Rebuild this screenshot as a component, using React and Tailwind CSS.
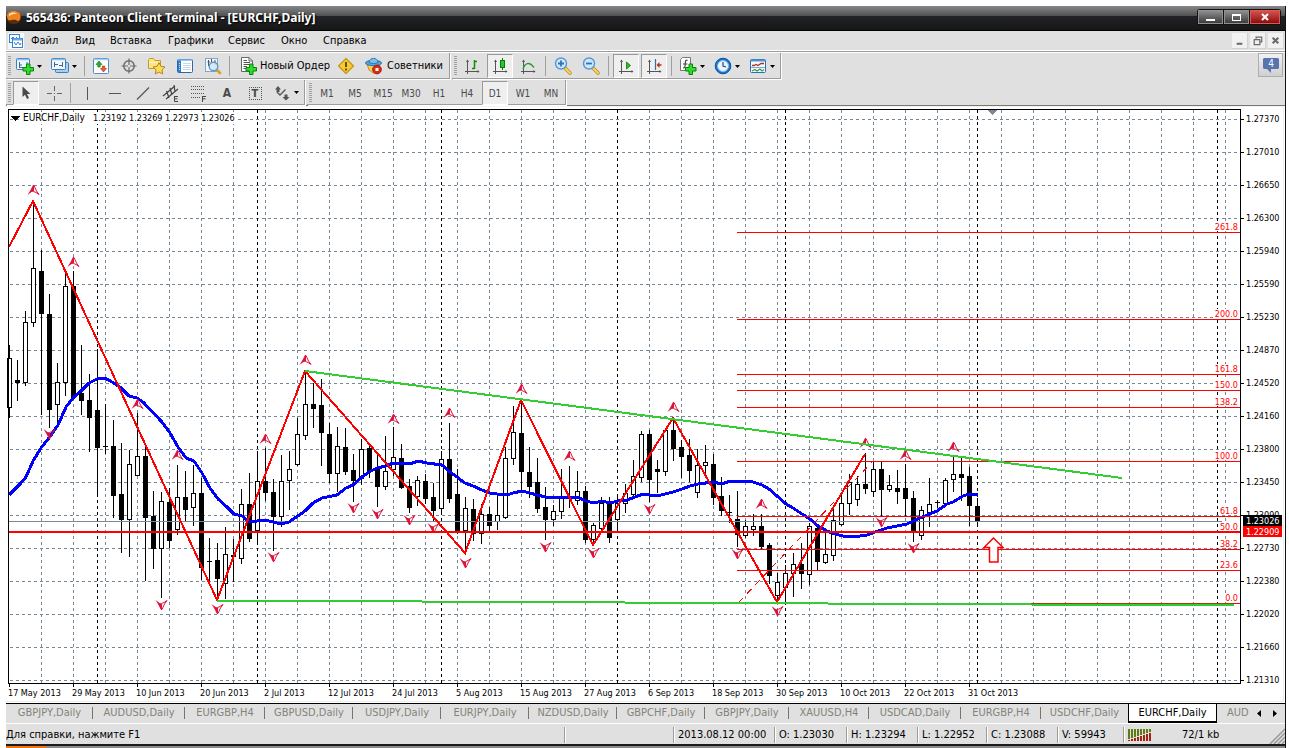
import React, { useState } from 'react';

// One row per bar: [high, body top, body bottom, low, rising]
const CANDLES = [
  [345, 358, 407, 417, 1], [360, 380, 382, 400, 0], [311, 322, 382, 385, 1], [201, 268, 322, 326, 1],
  [250, 271, 313, 414, 0], [294, 314, 409, 427, 0], [363, 382, 404, 425, 1], [272, 286, 382, 395, 1],
  [271, 286, 397, 398, 0], [345, 393, 400, 414, 0], [374, 400, 417, 451, 0], [349, 410, 447, 495, 0],
  [404, 446, 446, 453, 0], [420, 446, 495, 517, 0], [443, 494, 519, 552, 0], [450, 464, 519, 556, 1],
  [413, 456, 475, 475, 1], [447, 456, 517, 580, 0], [491, 516, 548, 568, 0], [492, 501, 548, 597, 1],
  [488, 502, 540, 547, 0], [465, 497, 529, 534, 1], [471, 497, 509, 521, 0], [465, 493, 507, 525, 1],
  [478, 493, 567, 579, 0], [538, 561, 561, 580, 0], [543, 560, 578, 599, 0], [527, 554, 583, 598, 1],
  [539, 555, 556, 581, 0], [489, 504, 558, 563, 1], [473, 504, 538, 541, 0], [451, 481, 530, 543, 1],
  [448, 481, 492, 500, 0], [479, 492, 516, 550, 0], [455, 481, 516, 526, 1], [451, 469, 480, 509, 1],
  [418, 434, 464, 465, 1], [371, 404, 435, 439, 1], [383, 404, 408, 427, 0], [379, 405, 432, 465, 0],
  [423, 434, 473, 482, 0], [427, 446, 473, 491, 1], [428, 447, 471, 474, 0], [454, 470, 480, 501, 0],
  [439, 449, 478, 484, 1], [445, 448, 470, 477, 0], [455, 467, 486, 506, 0], [436, 471, 486, 489, 1],
  [427, 457, 469, 475, 1], [444, 458, 487, 488, 0], [479, 486, 507, 512, 0], [476, 480, 496, 505, 1],
  [474, 481, 498, 503, 0], [483, 497, 510, 521, 0], [451, 459, 508, 514, 1], [423, 459, 498, 502, 0],
  [469, 494, 532, 533, 0], [497, 508, 530, 552, 1], [499, 509, 533, 540, 0], [504, 514, 533, 543, 1],
  [507, 514, 525, 530, 0], [496, 515, 521, 529, 1], [447, 458, 517, 518, 1], [406, 432, 458, 464, 1],
  [400, 433, 471, 492, 0], [447, 472, 486, 497, 0], [458, 482, 508, 512, 0], [487, 507, 519, 539, 0],
  [505, 511, 519, 525, 1], [469, 496, 511, 518, 1], [466, 497, 497, 507, 0], [471, 491, 500, 504, 1],
  [486, 491, 539, 542, 0], [523, 525, 539, 544, 1], [497, 503, 528, 529, 1], [497, 504, 537, 542, 0],
  [495, 503, 519, 530, 1], [484, 493, 503, 512, 1], [460, 476, 494, 495, 1], [431, 434, 477, 481, 1],
  [430, 434, 479, 501, 0], [460, 469, 471, 492, 0], [430, 430, 471, 475, 1], [418, 430, 448, 460, 0],
  [440, 447, 456, 477, 0], [439, 455, 470, 481, 0], [449, 465, 492, 497, 1], [445, 462, 465, 476, 1],
  [454, 464, 497, 504, 0], [477, 496, 510, 515, 0], [495, 512, 512, 522, 0], [491, 519, 534, 546, 0],
  [520, 526, 535, 537, 1], [514, 526, 529, 535, 1], [514, 526, 546, 548, 0], [543, 545, 575, 583, 0],
  [573, 582, 595, 601, 1], [565, 573, 587, 602, 1], [553, 564, 573, 596, 1], [543, 564, 573, 588, 0],
  [523, 526, 574, 584, 1], [527, 528, 561, 569, 0], [533, 554, 562, 563, 1], [506, 520, 555, 560, 1],
  [495, 503, 524, 525, 1], [474, 482, 503, 514, 1], [476, 484, 499, 505, 1], [453, 484, 488, 493, 0],
  [461, 469, 491, 496, 1], [461, 469, 489, 515, 0], [475, 485, 489, 491, 1], [470, 488, 491, 503, 0],
  [464, 488, 498, 515, 0], [491, 498, 532, 541, 0], [506, 510, 535, 539, 1], [478, 504, 512, 526, 1],
  [500, 502, 502, 507, 0], [478, 480, 503, 503, 1], [457, 474, 479, 491, 1], [457, 474, 477, 500, 0],
  [467, 476, 505, 525, 0], [498, 506, 521, 523, 0],
];

const AVERAGE =
  '9,495 20,484 26,477 33,461 41,448 49,438 58,425 66,407 74,397 82,390 89,383 97,379 105,378 112,382 120,387 129,396 137,398 143,402 162,422 170,433 178,447 186,458 194,461 202,473 210,488 218,499 227,507 234,514 242,516 250,522 257,521 265,520 273,522 281,524 289,522 305,511 313,503 322,498 337,495 346,488 353,485 362,477 369,472 377,468 386,466 393,463 410,464 418,461 427,463 442,465 450,472 457,477 465,483 473,486 482,490 490,493 497,494 507,495 513,493 522,491 530,493 537,495 546,497 562,497 570,498 577,497 586,501 594,503 602,501 610,503 618,501 627,500 635,497 643,494 657,496 673,492 682,489 690,486 698,484 713,482 722,484 730,481 753,482 762,485 769,489 777,496 786,504 793,508 802,514 810,519 818,526 827,531 835,534 843,536 860,536 867,535 875,532 887,528 907,524 920,518 937,511 947,504 953,502 963,496 969,494 978,494';

const ZIGZAG = '9,247 33,201 217,600 305,371 465,553 521,400 593,545 673,418 777,602 865,454';

const UP_FRACTALS = [
  [33, 190], [73, 262], [137, 404], [177, 455], [265, 439], [305, 360], [393, 419], [449, 413],
  [521, 389], [569, 456], [673, 407], [761, 504], [865, 443], [905, 455], [953, 447],
];
const DOWN_FRACTALS = [
  [49, 434], [161, 605], [217, 609], [273, 557], [353, 508], [377, 514], [409, 520], [433, 528],
  [465, 563], [545, 547], [593, 553], [649, 509], [737, 554], [777, 611], [881, 522], [913, 548],
];

const FIB = [
  ['261.8', 232], ['200.0', 319], ['161.8', 374], ['150.0', 390], ['138.2', 407], ['100.0', 461],
  ['61.8', 516], ['50.0', 532], ['38.2', 549], ['23.6', 570], ['0.0', 603],
];

const PRICES = [
  '1.27370', '1.27010', '1.26650', '1.26300', '1.25940', '1.25590', '1.25230', '1.24870', '1.24520',
  '1.24160', '1.23800', '1.23450', '1.23090', '1.22730', '1.22380', '1.22020', '1.21660', '1.21310',
];

const DATES = [
  '17 May 2013', '29 May 2013', '10 Jun 2013', '20 Jun 2013', '2 Jul 2013', '12 Jul 2013',
  '24 Jul 2013', '5 Aug 2013', '15 Aug 2013', '27 Aug 2013', '6 Sep 2013', '18 Sep 2013',
  '30 Sep 2013', '10 Oct 2013', '22 Oct 2013', '31 Oct 2013',
];

const MONTH_LINES = [97, 257, 441, 617, 785, 977, 1217];

const TABS = [
  ['GBPJPY,Daily', 'w-[87px]'], ['AUDUSD,Daily', 'w-[92px]'], ['EURGBP,H4', 'w-[80px]'],
  ['GBPUSD,Daily', 'w-[88px]'], ['USDJPY,Daily', 'w-[88px]'], ['EURJPY,Daily', 'w-[88px]'],
  ['NZDUSD,Daily', 'w-[88px]'], ['GBPCHF,Daily', 'w-[88px]'], ['GBPJPY,Daily', 'w-[84px]'],
  ['XAUUSD,H4', 'w-[80px]'], ['USDCAD,Daily', 'w-[92px]'], ['EURGBP,H4', 'w-[80px]'],
  ['USDCHF,Daily', 'w-[87px]'], ['EURCHF,Daily', 'w-[89px]'],
];

// Arrowhead with a solid left wing and an outlined right one
const Fractal = ({ x, y, down }) => (
  <g transform={`translate(${x} ${y}) scale(1 ${down ? -1 : 1})`} shapeRendering="auto">
    <path d="M-0.500 -5H0.500V1.500L-2 2L-6 5L-3 0Z" fill="#dc143c" />
    <path d="M0.500 -4.500L3 1L5.500 4.500L2.500 2.500L0 1.500" fill="none" stroke="#dc143c" />
  </g>
);

const PriceChart = () => (
  <svg
    viewBox="6 107 1279 596"
    className="block w-full h-auto bg-white font-['DejaVu_Sans_Condensed','DejaVu_Sans',sans-serif]"
    shapeRendering="crispEdges"
    fontSize="9"
    role="img"
    aria-label="EURCHF,Daily"
  >
    {/* grid */}
    <g stroke="#778899" strokeDasharray="3 3">
      {PRICES.map((p, i) => (
        <line key={p} x1="10" x2="1240" y1={119.5 + i * 33} y2={119.5 + i * 33} />
      ))}
      {Array.from({ length: 38 }, (_, i) => (
        <line key={i} x1={41.5 + i * 32} x2={41.5 + i * 32} y1="110" y2="683" />
      ))}
    </g>
    <g stroke="#000" strokeDasharray="3 3">
      {MONTH_LINES.map((x) => (
        <line key={x} x1={x + 0.5} x2={x + 0.5} y1="110" y2="683" />
      ))}
    </g>

    <rect x="22" y="112" width="213" height="12" fill="#fff" />
    <path d="M11 116H20L15.500 121Z" fill="#000" />
    <text x="23" y="121" fontSize="10">EURCHF,Daily</text>
    <text x="93" y="121">1.23192 1.23269 1.22973 1.23026</text>
    <path d="M988 110H997L992.500 115Z" fill="#778899" />

    {/* candles */}
    {CANDLES.map(([high, top, bottom, low, rising], i) => {
      const x = 9 + i * 8;
      return (
        <g key={x}>
          <rect x={x} y={high} width="1" height={low - high + 1} fill="#000" />
          <rect x={x - 2} y={top} width="5" height={bottom - top + 1} fill="#000" />
          {rising ? <rect x={x - 1} y={top + 1} width="3" height={bottom - top - 1} fill="#fff" /> : null}
        </g>
      );
    })}

    <line x1="9" x2="1222" y1="521.5" y2="521.5" stroke="#778899" />
    <polyline points={AVERAGE} fill="none" stroke="#00f" strokeWidth="3" strokeLinejoin="round" />

    {UP_FRACTALS.map(([x, y]) => (
      <Fractal key={x} x={x + 0.5} y={y} />
    ))}
    {DOWN_FRACTALS.map(([x, y]) => (
      <Fractal key={x} x={x + 0.5} y={y} down />
    ))}

    <polyline points={ZIGZAG} fill="none" stroke="#f00" strokeWidth="2" />
    <line x1="739" y1="602" x2="873" y2="461" stroke="#f00" strokeDasharray="6 6" />

    {/* retracement levels */}
    <g fill="#f00" textAnchor="end">
      {FIB.map(([label, y]) => (
        <g key={label}>
          <rect x="737" y={y} width="503" height="1" />
          <rect x={1239 - label.length * 5} y={y - 10} width={label.length * 5} height="9" fill="#fff" />
          <text x="1238" y={y - 2}>{label}</text>
        </g>
      ))}
    </g>
    <rect x="9" y="531" width="1231" height="2" fill="#f00" />

    <line x1="305" y1="371" x2="1122" y2="478" stroke="#32cd32" strokeWidth="2" />
    <line x1="217" y1="600.5" x2="1234" y2="605.5" stroke="#32cd32" strokeWidth="2" />
    <rect x="1031" y="603" width="203" height="1" fill="#a33a10" />
    <path d="M993.500 538L984 547.500H989.500V562H998V547.500H1003Z" fill="#fff" stroke="#f00" strokeWidth="1.500" shapeRendering="auto" />

    {/* frame and scales */}
    <path d="M8.500 109V683.500H1240.500V109.500H8" fill="none" stroke="#000" />
    {PRICES.map((p, i) => (
      <g key={p}>
        <rect x="1241" y={119 + i * 33} width="3" height="1" />
        <text x="1246" y={122 + i * 33}>{p}</text>
      </g>
    ))}
    {DATES.map((d, i) => (
      <g key={d}>
        <rect x={9 + i * 64} y="684" width="1" height="3" />
        <text x={8 + i * 64} y="696">{d}</text>
      </g>
    ))}
    <rect x="1243" y="515" width="39" height="11" fill="#000" />
    <rect x="1243" y="526" width="39" height="11" fill="#f00" />
    <text x="1246" y="524" fill="#fff">1.23026</text>
    <text x="1246" y="535" fill="#fff">1.22909</text>
    <rect x="6" y="701" width="1278" height="1" fill="#eee" />
    <rect x="1283" y="107" width="1" height="595" fill="#eee" />
  </svg>
);

const Icon = ({ children, className = 'size-5' }) => (
  <svg viewBox="0 0 20 20" className={`shrink-0 ${className}`} fill="none" aria-hidden="true">
    {children}
  </svg>
);

const Caret = () => (
  <svg viewBox="0 0 5 3" className="w-[5px] h-[3px] shrink-0" aria-hidden="true">
    <path d="M0 0H5L2.500 3Z" fill="#000" />
  </svg>
);

const Plus = ({ x, y }) => (
  <path
    transform={`translate(${x} ${y})`}
    d="M4 0.500H7.500V4H11V7.500H7.500V11H4V7.500H0.500V4H4Z"
    fill="#2fdc2f"
    stroke="#078307"
  />
);

const Axes = () => (
  <>
    <path d="M5.500 4V18M3 15.500H17" stroke="#555" />
    <path d="M4 6L5.500 3.500L7 6ZM15.500 14L17.500 15.500L15.500 17Z" fill="#555" />
  </>
);

const Magnifier = ({ plus }) => (
  <>
    <path d="M12 12L17 17" stroke="#b58c1c" strokeWidth="3.600" strokeLinecap="round" />
    <path d="M12.500 12.500L17 17" stroke="#f8d458" strokeWidth="2.200" strokeLinecap="round" />
    <circle cx="8" cy="7.500" r="5.500" fill="#c9e9fb" stroke="#5a96d4" strokeWidth="1.400" />
    <path d={plus ? 'M5 7.500H11M8 4.500V10.500' : 'M5 7.500H11'} stroke="#3a70b0" strokeWidth="1.800" />
  </>
);

const icons = {
  newChart: (
    <>
      <rect x="1.500" y="2.500" width="13" height="11" rx="1" fill="#eef6fd" stroke="#3b7fc0" />
      <path d="M2 3.500H14" stroke="#8fc0ea" strokeWidth="1.500" />
      <path d="M4.500 6V11M4.500 9H7M12 6V9M4 11.500H9" stroke="#44688c" />
      <Plus x={7.5} y={7.5} />
    </>
  ),
  profiles: (
    <>
      <rect x="5.500" y="6.500" width="13" height="10" rx="1" fill="#a9cff0" stroke="#3b7fc0" />
      <rect x="1.500" y="2.500" width="14" height="11" rx="1" fill="#f3f8fd" stroke="#3b7fc0" />
      <path d="M2 3.500H15" stroke="#8fc0ea" strokeWidth="1.500" />
      <path d="M4.500 6V11M12.500 6V11M4 8.500H8M9 9.500H13" stroke="#44688c" />
    </>
  ),
  market: (
    <>
      <rect x="2.500" y="2.500" width="15" height="15" rx="1" fill="#fff" stroke="#4b90d0" />
      <path d="M3 3.500H17" stroke="#a9cff0" strokeWidth="1.500" />
      <path d="M8 5L11 8.500H9.200V11H6.800V8.500H5Z" fill="#2eaa2e" stroke="#0b7a0b" strokeWidth=".6" />
      <path d="M12.500 16L9.500 12.500H11.300V10H13.700V12.500H15.500Z" fill="#ec5a38" stroke="#b32a10" strokeWidth=".6" />
    </>
  ),
  target: (
    <>
      <circle cx="10" cy="10" r="5.200" stroke="#6c6c6c" strokeWidth="1.500" />
      <path d="M10 2.500V9M10 11V17.500M2.500 10H9M11 10H17.500" stroke="#6c6c6c" strokeWidth="1.200" />
    </>
  ),
  favorites: (
    <>
      <path d="M1.500 12.500V3.500L2.500 2.500H6.500L8 4.500H13.500V12.500Z" fill="#fbe48a" stroke="#c99a20" />
      <path d="M2 6.500H13" stroke="#fff4bc" />
      <path
        d="M12 6.500L13.900 10.300L18 10.900L15 13.800L15.700 18L12 16L8.300 18L9 13.800L6 10.900L10.100 10.300Z"
        fill="#fdda58"
        stroke="#b98a16"
      />
    </>
  ),
  terminal: (
    <>
      <rect x="2.500" y="3.500" width="15" height="13" rx="1" fill="#fff" stroke="#2369b4" />
      <path d="M3 4H17" stroke="#7db4e8" strokeWidth="1.500" />
      <rect x="3" y="4.500" width="3" height="11.500" fill="#2f7ed0" />
      <path d="M8 7.500H16M8 9.500H16M8 11.500H16M8 13.500H16" stroke="#c6d8ea" />
      <path d="M4.500 7V14" stroke="#bfe0ff" strokeDasharray="1 1" />
    </>
  ),
  tester: (
    <>
      <rect x="2.500" y="2.500" width="12" height="13" fill="#f4f8fc" stroke="#7ba7d2" />
      <path d="M5.500 4V10M8.500 3V6M12 4V9M4.500 6H7" stroke="#555" />
      <path d="M13.500 13.500L17 17" stroke="#d3a326" strokeWidth="2.800" strokeLinecap="round" />
      <circle cx="10.500" cy="10.500" r="4.300" fill="#c9e9fb" fillOpacity=".85" stroke="#6a93bd" strokeWidth="1.400" />
    </>
  ),
  newOrder: (
    <>
      <path d="M3.500 1.500H11L14.500 5V15.500H3.500Z" fill="#fff" stroke="#666" />
      <path d="M11 1.500V5H14.500" stroke="#666" />
      <path d="M5.500 4.500H9M5.500 6.500H12M5.500 8.500H12M5.500 10.500H9M5.500 12.500H8" stroke="#555" />
      <Plus x={7.5} y={7.5} />
    </>
  ),
  warning: (
    <>
      <path d="M10 2.500L17.500 10L10 17.500L2.500 10Z" fill="#f9cb30" stroke="#c29a20" strokeWidth="1.300" strokeLinejoin="round" />
      <path d="M10 6V11M10 12.500V14.500" stroke="#5a4200" strokeWidth="1.800" />
    </>
  ),
  experts: (
    <>
      <path d="M3 8L5 14L10 17.500L15 13L16 8Z" fill="#f7cf52" stroke="#c0951e" />
      <ellipse cx="9.500" cy="7" rx="8" ry="2.700" fill="#5aa3d6" stroke="#2d77ad" />
      <path d="M5 6.500C5 1 14 1 14 6.500C12 7.800 7 7.800 5 6.500Z" fill="#7cc0ea" stroke="#2d77ad" />
      <circle cx="13" cy="13.500" r="4.300" fill="#dd2a16" stroke="#a01507" />
      <rect x="11.500" y="12" width="3" height="3" fill="#fff" />
    </>
  ),
  bars: (
    <>
      <Axes />
      <path d="M12.500 4V13M12.500 5.500H15M10 12.500H12.500" stroke="#0c900c" strokeWidth="1.500" />
    </>
  ),
  candles: (
    <>
      <Axes />
      <path d="M12.500 2V14" stroke="#0a7a0a" />
      <rect x="10.500" y="4.500" width="4" height="7" fill="#2bc82b" stroke="#0a7a0a" />
    </>
  ),
  line: (
    <>
      <Axes />
      <path d="M5 13C7 7 11 5 16 11.500" stroke="#2b9a2b" strokeWidth="1.400" />
    </>
  ),
  zoomIn: <Magnifier plus />,
  zoomOut: <Magnifier />,
  autoScroll: (
    <>
      <Axes />
      <path d="M10.500 6V13L14.500 9.500Z" fill="#30b830" stroke="#0a7a0a" strokeWidth=".8" />
    </>
  ),
  chartShift: (
    <>
      <Axes />
      <path d="M11.500 3V14" stroke="#2a6fae" strokeWidth="1.200" />
      <path d="M12.500 9L15.500 6V8.200H17.500V9.800H15.500V12Z" fill="#b83614" />
    </>
  ),
  indicators: (
    <>
      <path d="M2.500 3.500L4.500 1.500H12.500V14.500H2.500Z" fill="#fff" stroke="#777" />
      <path d="M9.500 4.500C7.500 3.500 7.500 5 7.200 8C7 11 7 12 5 12M5 8H9.500" stroke="#444" strokeWidth="1.200" />
      <Plus x={7} y={7.5} />
    </>
  ),
  clock: (
    <>
      <circle cx="10" cy="10" r="7.800" fill="#1a72c8" stroke="#0f559c" />
      <circle cx="10" cy="10" r="5.500" fill="#eaf5fd" stroke="#7cbcf0" />
      <path d="M10 6V10L13 11" stroke="#27496d" strokeWidth="1.200" />
    </>
  ),
  template: (
    <>
      <rect x="2.500" y="3.500" width="15" height="13" rx="1" fill="#f5f9fd" stroke="#2f6fb0" />
      <path d="M3 4.500H17" stroke="#4d94d8" strokeWidth="2" />
      <path d="M4 9.500H6L8 8.500L10 9.500L13 7.500H16" stroke="#b03222" strokeWidth="1.300" />
      <path d="M3 11.500H17" stroke="#7aa8d4" />
      <path d="M4 15L7 13.500L9 15L12 13L14 15L16 13.500" stroke="#2f9e46" strokeWidth="1.200" />
    </>
  ),
  cursor: <path d="M6.500 3.500V14L9 11.700L11 16L13 15L11 10.900H14.500Z" fill="#4a4a4a" />,
  crosshair: <path d="M10.500 3V8M10.500 13V18M3 10.500H8M13 10.500H18M10 10.500H11" stroke="#666" />,
  vline: <path d="M10.500 4V17" stroke="#555" />,
  hline: <path d="M4 10.500H16" stroke="#555" />,
  trend: <path d="M4 16.500L16 4.500" stroke="#555" strokeWidth="1.300" />,
  channel: (
    <>
      <path d="M2 13L14 3M5 16L17 6M5.500 8L8 15M9 5L11 12M13 2L14 9" stroke="#444" strokeWidth="1.200" />
      <path d="M13.500 13V18.500M13.500 13.500H17M13.500 15.800H16.500M13.500 18.500H17" stroke="#444" />
    </>
  ),
  fibo: (
    <>
      <path d="M2 3.500H16M2 6.500H16M2 10.500H16M2 14.500H11" stroke="#555" strokeDasharray="1 1" />
      <path d="M13.500 13V19M13.500 13.500H17M13.500 15.800H16.500" stroke="#444" />
    </>
  ),
  arrows: (
    <>
      <path d="M6 3L9 6.500H7.500V9H4.500V6.500H3Z" fill="#555" />
      <path d="M5 9L8 12L13.500 6.500" stroke="#555" strokeWidth="1.400" />
      <path d="M14 17.500L10.500 14H12.500V11.500H15.500V14H17.500Z" fill="#555" />
    </>
  ),
};

const ToolButton = ({ name, label, menu, pressed }) => (
  <button
    type="button"
    aria-label={label}
    title={label}
    className={`flex items-center shrink-0 h-[24px] ${menu ? 'w-[35px] pl-[3px] gap-[2px]' : 'w-[26px] mx-px justify-center'} ${
      pressed ? 'bg-[#efefef] border border-t-[#9a9a9a] border-l-[#9a9a9a] border-r-white border-b-white' : ''
    }`}
  >
    <Icon>{icons[name]}</Icon>
    {menu && <Caret />}
  </button>
);

const Separator = ({ wide }) => (
  <span className={`w-px h-[20px] bg-[#a0a0a0] shrink-0 ${wide ? 'mx-[3px]' : 'mx-[2px]'}`} />
);

const Grip = () => (
  <span className="w-[3px] h-[20px] ml-[2px] mr-px shrink-0 bg-[repeating-linear-gradient(#a0a0a0_0_1px,#e0e0e0_1px_2px)]" />
);

const Group = ({ children, label }) => (
  <div
    role="toolbar"
    aria-label={label}
    className="flex items-center h-full pt-px border-r border-b border-[#9c9c9c] shadow-[1px_1px_0_#fff] mr-[2px]"
  >
    {children}
  </div>
);

const LetterButton = ({ children, pressed, onClick }) => (
  <button
    type="button"
    onClick={onClick}
    className={`w-[26px] mx-px h-[24px] pt-px shrink-0 text-[10px] text-[#4a4a4a] ${
      pressed ? 'bg-[#efefef] border border-t-[#9a9a9a] border-l-[#9a9a9a] border-r-white border-b-white' : ''
    }`}
  >
    {children}
  </button>
);

const TitleBar = () => (
  <header className="flex items-center h-[25px] border-b border-black bg-[linear-gradient(#85878a_0,#505050_10px,#222326_10px,#161616_100%)]">
    <svg viewBox="0 0 16 16" className="size-4 mr-[4px]" aria-hidden="true">
      <rect x="1" y="1" width="14" height="13" rx="6" fill="#5a2a0c" />
      <path d="M1 7C1 2 4 1 8 1C12 1 15 3 14.500 7C14 11 12 12 10 10C7 9 4 11 2 10Z" fill="#ee8420" />
      <path d="M3 4.500C5 2 9 2 11 4C8 3.500 5 4.500 3 6.500Z" fill="#ffe0ae" />
    </svg>
    <h1 className="flex-1 whitespace-nowrap font-['Noto_Sans',sans-serif] text-[12px] leading-[20px] font-bold text-white [text-shadow:1px_1px_1px_#000]">
      565436: Panteon Client Terminal - [EURCHF,Daily]
    </h1>
    <div className="flex gap-px mr-[4px] mb-[2px] p-px rounded-[3px] bg-[#111]">
      <button type="button" aria-label="Свернуть" className="w-[25px] h-[14px] border border-[#909090] bg-linear-to-b from-[#8d8e90] to-[#3d3d3f]">
        <span className="block w-[9px] h-[2px] mx-auto mt-[6px] bg-white" />
      </button>
      <button type="button" aria-label="Развернуть" className="w-[25px] h-[14px] border border-[#909090] bg-linear-to-b from-[#8d8e90] to-[#3d3d3f]">
        <span className="block w-[9px] h-[7px] mx-auto border border-t-2 border-white" />
      </button>
      <button type="button" aria-label="Закрыть" className="w-[30px] h-[14px] flex items-center justify-center border border-[#d65a5a] bg-linear-to-b from-[#d65050] to-[#8c0808]">
        <svg viewBox="0 0 8 8" className="size-2"><path d="M1 1L7 7M7 1L1 7" stroke="#fff" strokeWidth="2" /></svg>
      </button>
    </div>
  </header>
);

const MENU = [
  ['Файл', 'w-[44px]'], ['Вид', 'w-[35px]'], ['Вставка', 'w-[58px]'], ['Графики', 'w-[60px]'],
  ['Сервис', 'w-[53px]'], ['Окно', 'w-[42px]'], ['Справка', 'w-[50px]'],
];

const MenuBar = () => (
  <nav className="flex items-center h-[19px] pt-px pl-[2px] pr-px text-[11px]">
    <svg viewBox="0 0 16 16" className="size-4 mr-[7px] bg-[#f5faff]" fill="none" aria-hidden="true">
      <rect x="1.500" y="1.500" width="10" height="8" stroke="#3c83cc" />
      <path d="M3 6L5 4L7 6L9 4" stroke="#3c83cc" />
      <rect x="4.500" y="5.500" width="10" height="9" fill="#fff" stroke="#3c83cc" />
      <path d="M5 6.500H14" stroke="#6da8e2" strokeWidth="2" />
      <path d="M6 9L8 12L10 9L12 12L13 10" stroke="#3c83cc" />
    </svg>
    {MENU.map(([label, width]) => (
      <button key={label} type="button" className={`${width} pt-px text-left`}>{label}</button>
    ))}
    <div className="flex gap-[2px] ml-auto">
      {[
        ['Свернуть окно', 'M5 11.500H11'],
        ['Восстановить окно', 'M6.500 6V4.500H12.500V9.500H11M4 7H11M4.500 7V12.500H10.500V7'],
        ['Закрыть окно', 'M5 5L11 11M11 5L5 11'],
      ].map(([label, d], i) => (
        <button key={label} type="button" aria-label={label} className="size-4 bg-[#f1f1f1] border-r border-b border-[#d2d2d2]">
          <svg viewBox="0 0 16 16" className="size-[15px]" fill="none">
            <path d={d} stroke="#6a6a6a" strokeWidth={i === 1 ? 1.3 : 2.2} />
          </svg>
        </button>
      ))}
    </div>
  </nav>
);

const StandardToolbar = () => (
  <div className="flex h-[27px] pb-px">
    <Group label="Стандартная">
      <Grip />
      <ToolButton name="newChart" label="Новый график" menu />
      <ToolButton name="profiles" label="Профили" menu />
      <Separator />
      <ToolButton name="market" label="Обзор рынка" />
      <ToolButton name="target" label="Окно данных" />
      <ToolButton name="favorites" label="Навигатор" />
      <ToolButton name="terminal" label="Терминал" />
      <ToolButton name="tester" label="Тестер стратегий" />
      <Separator />
      <button type="button" className="flex items-center gap-[2px] w-[100px] pl-[6px] text-[11px] whitespace-nowrap shrink-0">
        <Icon>{icons.newOrder}</Icon>
        Новый Ордер
      </button>
      <ToolButton name="warning" label="MetaEditor" />
      <button type="button" className="flex items-center gap-[3px] w-[89px] pl-[4px] text-[11px] whitespace-nowrap shrink-0">
        <Icon>{icons.experts}</Icon>
        Советники
      </button>
    </Group>
    <Group label="Графики">
      <Grip />
      <ToolButton name="bars" label="Бары" />
      <ToolButton name="candles" label="Свечи" pressed />
      <ToolButton name="line" label="Линия" />
      <Separator wide />
      <ToolButton name="zoomIn" label="Увеличить" />
      <ToolButton name="zoomOut" label="Уменьшить" />
      <Separator wide />
      <ToolButton name="autoScroll" label="Автопрокрутка" pressed />
      <ToolButton name="chartShift" label="Сдвиг графика" pressed />
      <Separator wide />
      <ToolButton name="indicators" label="Индикаторы" menu />
      <ToolButton name="clock" label="Периоды" menu />
      <ToolButton name="template" label="Шаблоны" menu />
    </Group>
    <button
      type="button"
      aria-label="Сообщения: 4"
      className="flex justify-center items-center w-[25px] h-[24px] ml-auto mr-[2px] border border-[#adadad] bg-linear-to-b from-[#f2f2f2] to-[#cfcfcf]"
    >
      <svg viewBox="0 0 16 17" className="w-4 h-[17px]" aria-hidden="true">
        <path d="M1 1H15L16 2V11L15 12H8V16L4 12H1L0 11V2Z" fill="#5674b0" />
        <text x="8" y="10" textAnchor="middle" fill="#fff" fontSize="10">4</text>
      </svg>
    </button>
  </div>
);

const PERIODS = ['M1', 'M5', 'M15', 'M30', 'H1', 'H4', 'D1', 'W1', 'MN'];

const DrawingToolbar = () => {
  const [period, setPeriod] = useState('D1');

  return (
    <div className="flex h-[26px] border-b border-[#77776c]">
      <Group label="Графические инструменты">
        <Grip />
        <ToolButton name="cursor" label="Курсор" pressed />
        <ToolButton name="crosshair" label="Перекрестие" />
        <Separator />
        <ToolButton name="vline" label="Вертикальная линия" />
        <ToolButton name="hline" label="Горизонтальная линия" />
        <ToolButton name="trend" label="Трендовая линия" />
        <ToolButton name="channel" label="Канал" />
        <ToolButton name="fibo" label="Линии Фибоначчи" />
        <LetterButton><span className="text-[12px] font-bold">A</span></LetterButton>
        <LetterButton>
          <span className="block size-[13px] mx-auto border border-dotted border-[#555] text-[11px] leading-[12px] font-bold">T</span>
        </LetterButton>
        <ToolButton name="arrows" label="Стрелки" menu />
      </Group>
      <Group label="Периоды">
        <Grip />
        {PERIODS.map((p) => (
          <LetterButton key={p} pressed={p === period} onClick={() => setPeriod(p)}>{p}</LetterButton>
        ))}
      </Group>
    </div>
  );
};

const ChartTabs = () => {
  const [active, setActive] = useState(13);

  return (
    <div className="flex h-[20px] border-t border-black text-[11px] text-[#84827a] overflow-hidden">
      {TABS.map(([label, width], i) => (
        <button
          key={i}
          type="button"
          onClick={() => setActive(i)}
          className={`relative flex items-center justify-center shrink-0 h-[19px] whitespace-nowrap ${width} ${
            i === active
              ? 'pt-px bg-white text-black border-x border-b-2 border-black'
              : ''
          }`}
        >
          {label}
          {i !== active && i !== active - 1 && <span className="absolute right-0 top-[3px] w-px h-[12px] bg-[#77756c]" />}
        </button>
      ))}
      <button type="button" className="flex-1 min-w-0 pl-[10px] text-left overflow-hidden whitespace-nowrap">AUD</button>
      <button type="button" aria-label="Назад" className="w-[12px] shrink-0 text-black">
        <svg viewBox="0 0 4 7" className="w-[4px] h-[7px] mx-auto"><path d="M4 0V7L0 3.500Z" fill="#000" /></svg>
      </button>
      <button type="button" aria-label="Вперед" className="w-[20px] shrink-0 text-black">
        <svg viewBox="0 0 4 7" className="w-[4px] h-[7px] mx-auto"><path d="M0 0V7L4 3.500Z" fill="#000" /></svg>
      </button>
    </div>
  );
};

const StatusCell = ({ width, children }) => (
  <span className={`flex items-center shrink-0 h-[16px] pl-[4px] whitespace-nowrap border-l border-[#9c9c9c] shadow-[inset_1px_0_0_#fff] ${width}`}>
    {children}
  </span>
);

const StatusBar = () => (
  <footer className="flex items-center h-[21px] pt-[2px] border-t border-white text-[11px] overflow-hidden">
    <span className="flex-1 min-w-0 whitespace-nowrap">Для справки, нажмите F1</span>
    <StatusCell width="w-[109px]" />
    <StatusCell width="w-[101px]">2013.08.12 00:00</StatusCell>
    <StatusCell width="w-[72px]">O: 1.23030</StatusCell>
    <StatusCell width="w-[71px]">H: 1.23294</StatusCell>
    <StatusCell width="w-[69px]">L: 1.22952</StatusCell>
    <StatusCell width="w-[71px]">C: 1.23088</StatusCell>
    <StatusCell width="w-[66px]">V: 59943</StatusCell>
    <StatusCell width="w-[162px]">
      <svg viewBox="0 0 24 12" className="w-[24px] h-[12px] mr-[30px]" aria-hidden="true">
        {Array.from({ length: 8 }, (_, i) => (
          <g key={i}>
            <rect x={i * 3} y="0" width="2" height={10 - i} fill="#5d7d14" />
            <rect x={i * 3} y={11 - i} width="2" height={1 + i} fill="#a32310" />
          </g>
        ))}
      </svg>
      72/1 kb
      <svg viewBox="0 0 16 16" className="size-4 ml-auto mt-[2px]" aria-hidden="true">
        <path d="M1 16L16 1M5 16L16 5M9 16L16 9M13 16L16 13" stroke="#999" strokeWidth="1.500" />
      </svg>
    </StatusCell>
  </footer>
);

const App = () => (
  <div className="min-h-screen pt-[6px] pl-[6px] pr-[3px] bg-white font-['DejaVu_Sans_Condensed','DejaVu_Sans',sans-serif] text-black overflow-hidden">
    <div className="border-r border-[#111] bg-[#e0e0e0]">
      <TitleBar />
      <MenuBar />
      <div className="h-[3px] border-y border-white bg-[#9c9c9c]" />
      <StandardToolbar />
      <DrawingToolbar />
      <main className="border-t border-[#f4f4f4]">
        <PriceChart />
      </main>
      <ChartTabs />
      <StatusBar />
      <div className="h-[2px] bg-[#1c1c1e]" />
      <div className="flex h-[2px] bg-[#8a8a8a]">
        <span className="w-[40px] bg-[#ee7410]" />
      </div>
    </div>
  </div>
);

export default App;
